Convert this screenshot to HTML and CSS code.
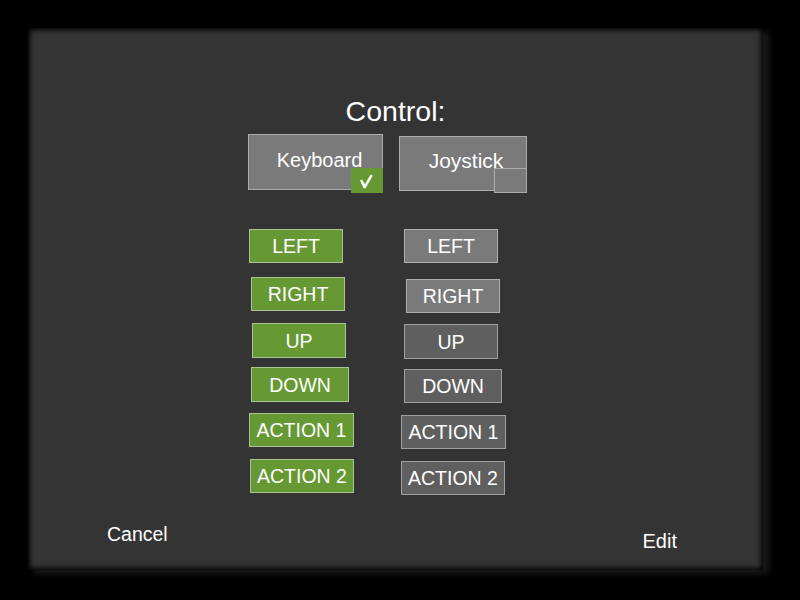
FILE: index.html
```html
<!DOCTYPE html>
<html>
<head>
<meta charset="utf-8">
<link rel="stylesheet" href="styles.css">
</head>
<body>
<div class="panel">
  <h1 class="title">Control:</h1>
  <div class="modes">
    <div class="mode mode-keyboard">Keyboard<span class="badge badge-on"><svg class="check" width="32" height="25" viewBox="0 0 32 25"><polygon points="9,12.6 11.1,11.6 13.9,16.2 19.6,6.6 21.8,7.6 14.6,20.2 12.6,20.2" fill="#fff"/></svg></span></div>
    <div class="mode mode-joystick">Joystick<span class="badge badge-off"></span></div>
  </div>
  <div class="keys">
    <div class="key green k1l">LEFT</div>
    <div class="key gray k1r">LEFT</div>
    <div class="key green k2l">RIGHT</div>
    <div class="key gray k2r">RIGHT</div>
    <div class="key green k3l">UP</div>
    <div class="key dark k3r">UP</div>
    <div class="key green k4l">DOWN</div>
    <div class="key dark k4r">DOWN</div>
    <div class="key green k5l">ACTION 1</div>
    <div class="key dark k5r">ACTION 1</div>
    <div class="key green k6l">ACTION 2</div>
    <div class="key dark k6r">ACTION 2</div>
  </div>
  <div class="footer">
    <span class="link cancel">Cancel</span>
    <span class="link edit">Edit</span>
  </div>
</div>
</body>
</html>
```

FILE: styles.css
```css
html, body {
  margin: 0;
  padding: 0;
  background: #000;
  width: 800px;
  height: 600px;
  overflow: hidden;
  font-family: "Liberation Sans", Arial, sans-serif;
  color: #fff;
}

.panel {
  box-sizing: border-box;
  margin: 28px 0 0 28px;
  width: 735px;
  height: 542px;
  background: #343434;
  box-shadow: inset 0 0 5px 2px #000, 6px 4px 6px rgba(40, 40, 40, 0.6);
  padding-top: 67px;
}

.title {
  margin: 0;
  font-size: 28.5px;
  font-weight: normal;
  line-height: 32px;
  text-align: center;
}

.modes {
  display: flex;
  align-items: flex-start;
  margin-top: 7px;
  padding-left: 220px;
  gap: 16px;
}

.mode {
  position: relative;
  box-sizing: border-box;
  display: flex;
  align-items: center;
  justify-content: center;
  background: #7a7a7a;
  border: 1px solid #acacac;
  font-size: 20px;
  line-height: 22px;
}

.mode-keyboard {
  width: 135px;
  height: 56px;
  padding: 0 0 4px 8px;
}

.mode-joystick {
  width: 128px;
  height: 55px;
  margin-top: 2px;
  padding: 0 0 5px 6px;
  font-size: 21px;
}

.badge {
  position: absolute;
  right: -1px;
  box-sizing: border-box;
  width: 32px;
  height: 25px;
}

.badge-on {
  bottom: -4px;
  background: #669933;
}

.check {
  display: block;
}

.badge-off {
  bottom: -3px;
  width: 33px;
  height: 25px;
  background: #7a7a7a;
  border: 1px solid #acacac;
}

.keys {
  display: grid;
  grid-template-columns: 152px 160px;
  grid-template-rows: repeat(6, 46px);
  align-items: start;
  margin-top: 38px;
  padding-left: 221px;
}

.key {
  box-sizing: border-box;
  height: 34px;
  display: flex;
  align-items: center;
  justify-content: center;
  font-size: 19.5px;
  line-height: 22px;
  border: 1px solid #acacac;
}

.green {
  background: #669933;
  border-color: #a8c496;
}

.gray {
  background: #7a7a7a;
  border-color: #acacac;
}

.dark {
  background: #5f5f5f;
  border-color: #a0a0a0;
}

.k1l { width: 94px; }
.k1r { width: 94px; margin-left: 3px; }
.k2l { width: 94px; margin: 2px 0 0 2px; }
.k2r { width: 94px; margin: 4px 0 0 5px; }
.k3l { width: 94px; height: 35px; margin: 2px 0 0 3px; }
.k3r { width: 94px; height: 35px; margin: 3px 0 0 3px; }
.k4l { width: 98px; height: 35px; margin-left: 2px; }
.k4r { width: 98px; margin: 2px 0 0 3px; }
.k5l { width: 105px; }
.k5r { width: 105px; margin-top: 2px; }
.k6l { width: 104px; margin-left: 1px; }
.k6r { width: 104px; margin-top: 2px; }

.footer {
  display: flex;
  justify-content: space-between;
  align-items: flex-start;
  margin-top: 18px;
  padding: 0 86px 0 79px;
}

.link {
  font-size: 19.5px;
  line-height: 22px;
}

.edit {
  font-size: 20px;
  margin-top: 7px;
}
```
